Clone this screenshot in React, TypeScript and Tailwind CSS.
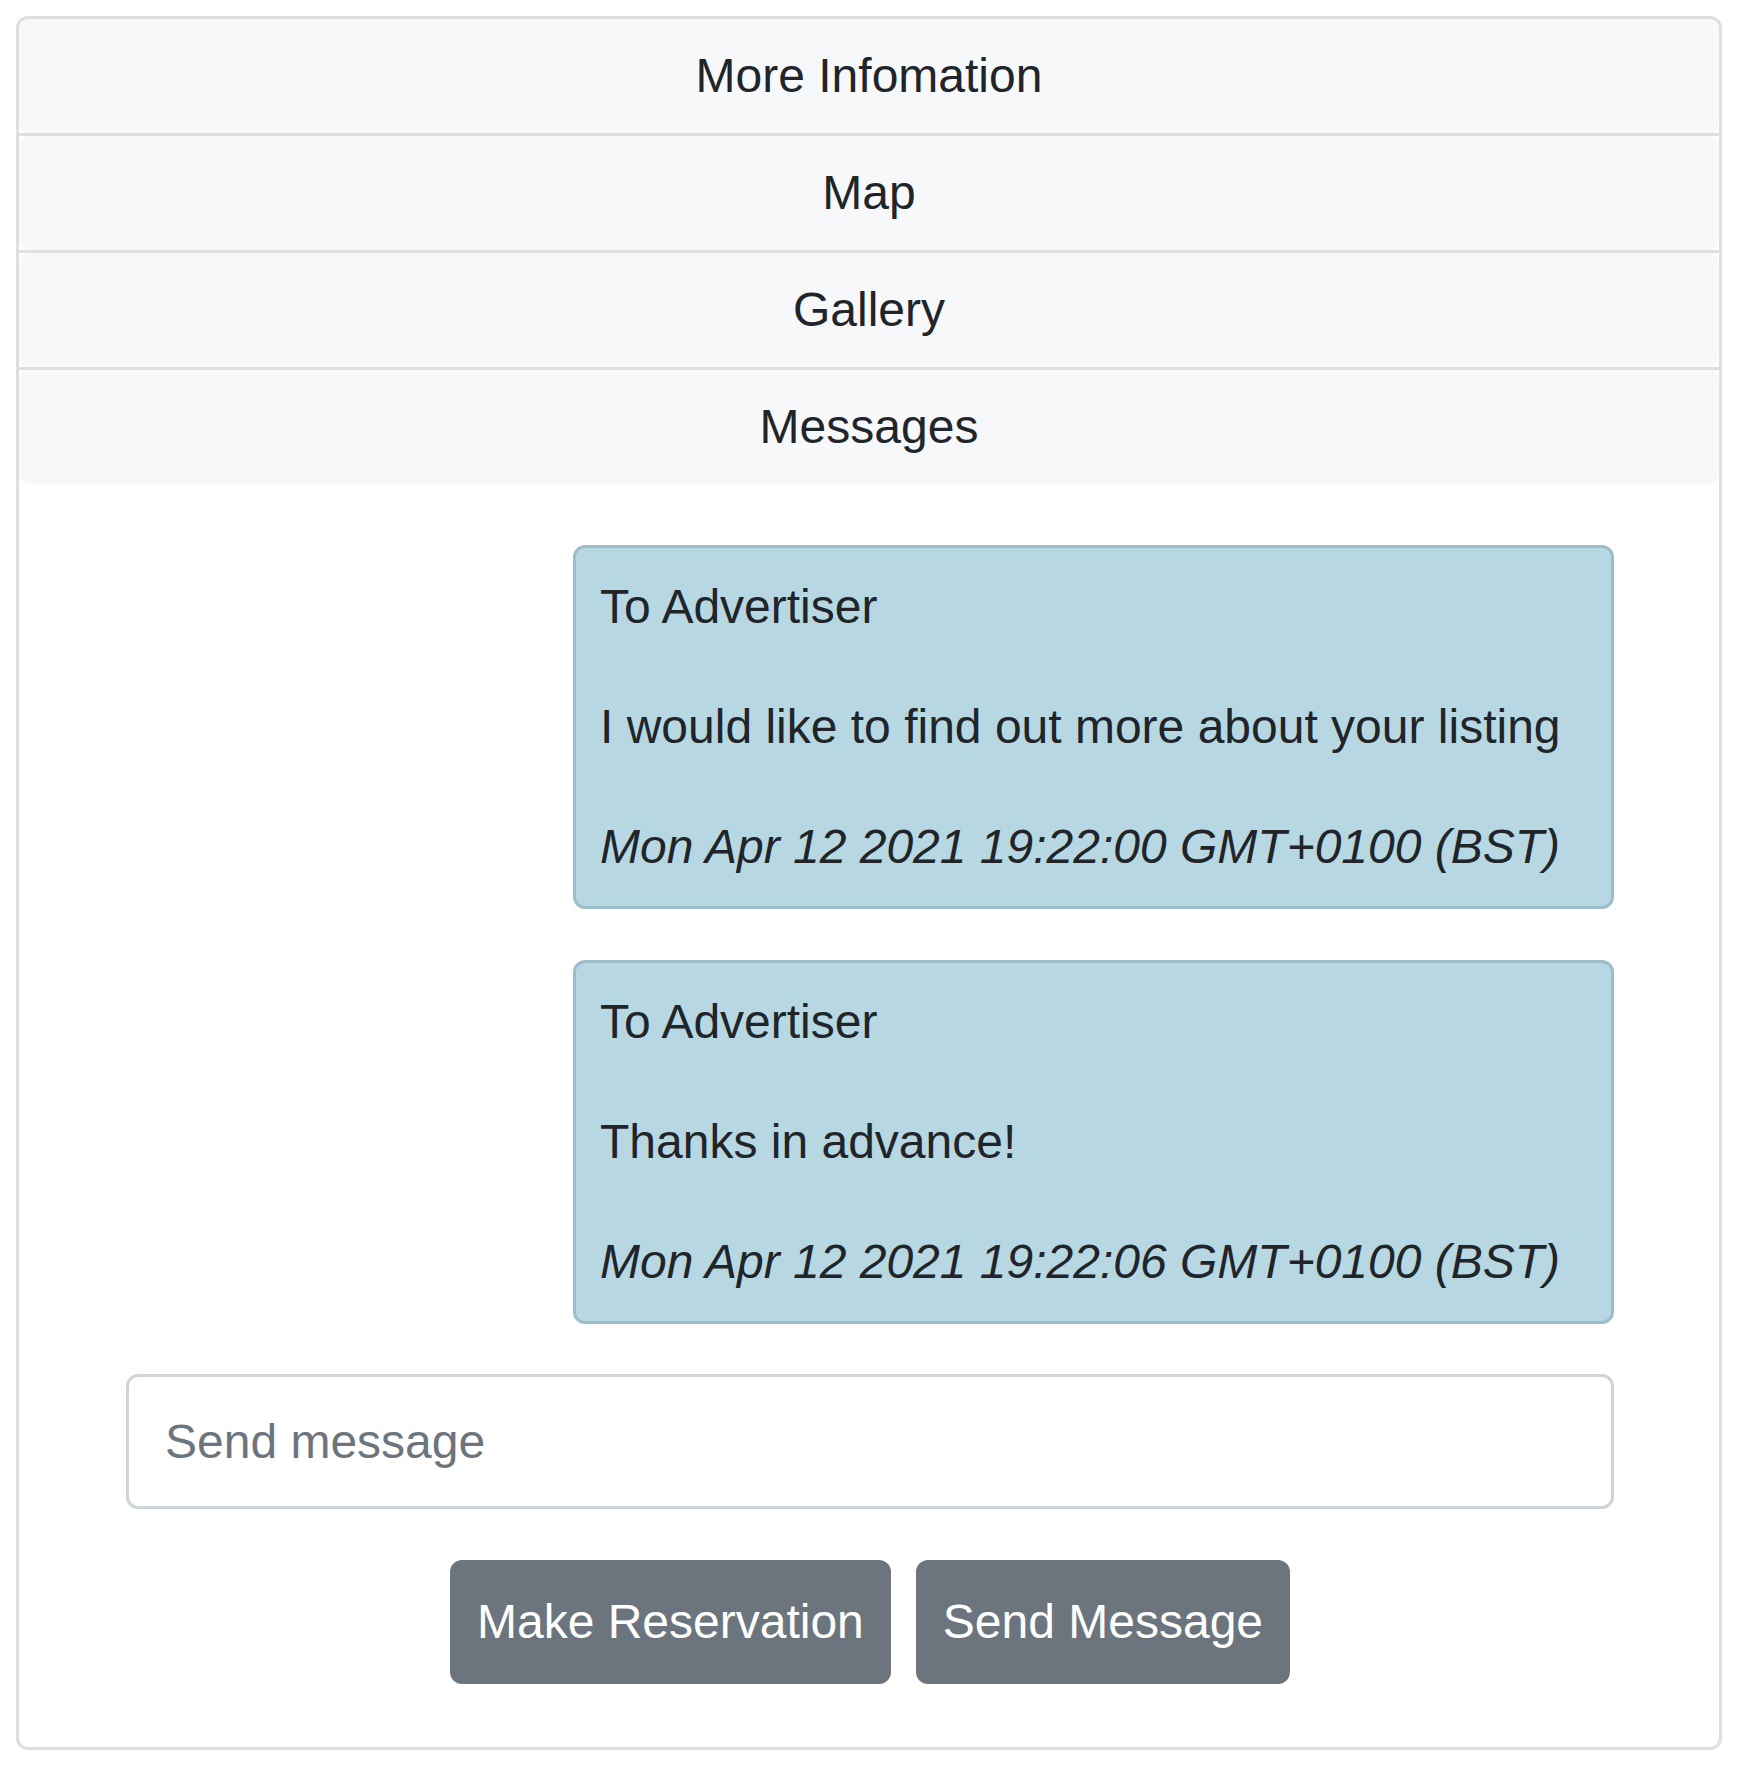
import React from 'react'

const sections = ['More Infomation', 'Map', 'Gallery', 'Messages']

const messages = [
  {
    to: 'To Advertiser',
    body: 'I would like to find out more about your listing',
    date: 'Mon Apr 12 2021 19:22:00 GMT+0100 (BST)',
  },
  {
    to: 'To Advertiser',
    body: 'Thanks in advance!',
    date: 'Mon Apr 12 2021 19:22:06 GMT+0100 (BST)',
  },
]

function MessageBubble({ to, body, date }: { to: string; body: string; date: string }) {
  return (
    <div className="ml-auto w-[1041px] rounded-[12px] border-[3px] border-[#9dbdc9] bg-[#b7d8e3] px-[24px] py-[23px]">
      <p className="mb-[48px] leading-[72px]">{to}</p>
      <p className="mb-[48px] leading-[72px]">{body}</p>
      <p className="leading-[72px] italic">{date}</p>
    </div>
  )
}

export default function App() {
  return (
    <div
      className="min-h-[1766px] bg-white p-[16px] text-[48px] text-[#212529]"
      style={{ fontFamily: '"Liberation Sans", Arial, Helvetica, sans-serif' }}
    >
      <div className="rounded-[12px] border-[3px] border-[#dfdfdf] bg-white">
        {/* Accordion headers */}
        <div className="flex flex-col">
          {sections.map((title, i) => (
            <div
              key={title}
              className={
                i < sections.length - 1
                  ? 'border-b-[3px] border-[#dfdfdf]'
                  : ''
              }
            >
              <button className="flex h-[114px] w-full items-center justify-center rounded-[10px] bg-[#f7f8fa] text-[48px] text-[#212529]">
                {title}
              </button>
            </div>
          ))}
        </div>

        {/* Messages panel */}
        <div className="ml-[107px] w-[1488px] pb-[63px] pt-[61px]">
          <div className="flex flex-col gap-[51px]">
            {messages.map((m, i) => (
              <MessageBubble key={i} {...m} />
            ))}
          </div>

          <input
            type="text"
            placeholder="Send message"
            className="mt-[50px] block h-[135px] w-full rounded-[12px] border-[3px] border-[#ced4da] bg-white px-[36px] text-[48px] text-[#212529] outline-none placeholder:text-[#6c757d]"
          />

          <div className="mt-[51px] flex justify-center gap-[25px]">
            <button className="h-[124px] rounded-[12px] bg-[#6c757d] px-[27px] text-[48px] text-white">
              Make Reservation
            </button>
            <button className="h-[124px] rounded-[12px] bg-[#6c757d] px-[27px] text-[48px] text-white">
              Send Message
            </button>
          </div>
        </div>
      </div>
    </div>
  )
}
